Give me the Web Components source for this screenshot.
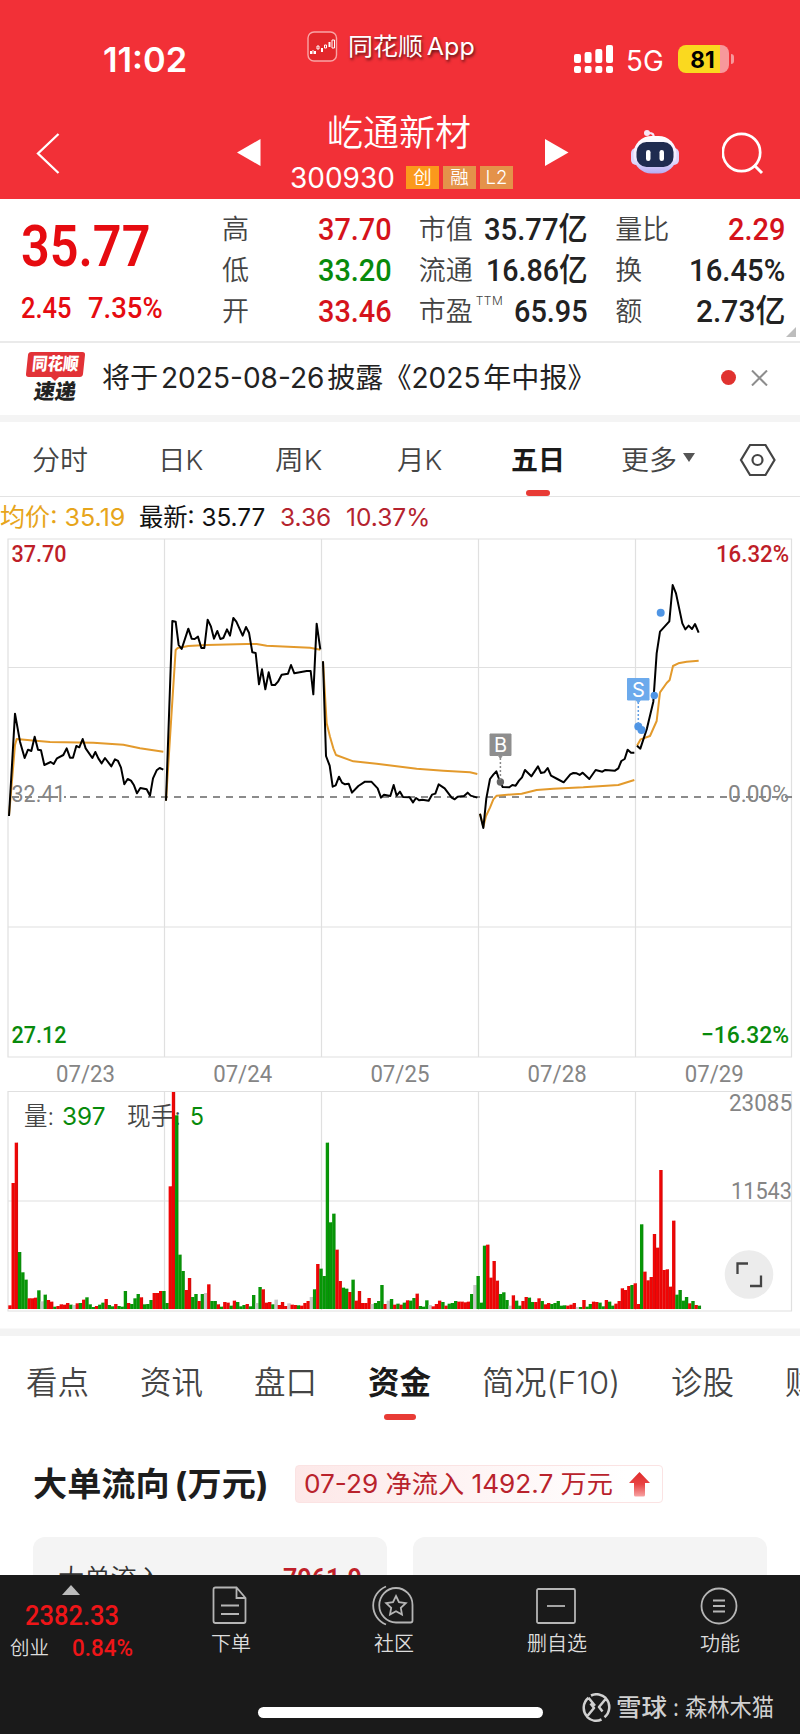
<!DOCTYPE html>
<html lang="zh-CN">
<head>
<meta charset="UTF-8">
<title>屹通新材 300930</title>
<style>
    body {
        margin: 0;
        width: 800px;
        height: 1734px;
        overflow: hidden;
        background: #fff;
        color: #222;
        font-family: "Inter", "Noto Sans CJK SC", sans-serif;
        --num: "Roboto", "Noto Sans CJK SC", sans-serif;
        --red: #e60b10;
        --green: #088a0b;
    }
</style>
</head>
<body>
<stock-app></stock-app>

<script>
// Registers an element whose shadow root holds the given markup
function component(name, html, setup) {
    customElements.define(name, class extends HTMLElement {
        constructor() {
            super();
            this.attachShadow({ mode: 'open' });
        }

        connectedCallback() {
            this.shadowRoot.innerHTML = typeof html === 'function' ? html(this) : html;
            if (setup) setup(this);
        }
    });
}

/**
 * Single line of text condensed or widened to the width in "w"
 */
component('fit-text', `
    <style>
        :host { display: inline-block; white-space: nowrap; flex: none; }
        span { display: inline-block; transform-origin: 0 50%; }
    </style>
    <span><slot></slot></span>
`, (el) => {
    const w = Number(el.getAttribute('w'));
    const span = el.shadowRoot.querySelector('span');
    const natural = span.offsetWidth;
    el.style.width = w + 'px';
    if (natural) span.style.transform = `scaleX(${w / natural})`;
});

/**
 * Phone status bar
 */
component('status-bar', `
    <style>
        :host { display: flex; height: 94px; color: #fff; align-items: flex-start; }
        .time { margin: 39px 0 0 103px; font-size: 34px; line-height: 42px; font-weight: 600; }
        .brand { display: flex; align-items: center; gap: 10px; margin: 31px 0 0 120px; height: 32px; font-size: 24px; word-spacing: -3px; text-shadow: 1px 2px 3px rgba(0,0,0,.65); }
        .brand fit-text { line-height: 32px; }
        .signal { margin: 45px 0 0 99px; }
        .net { margin: 42px 0 0 13px; font-size: 28.5px; line-height: 37px; }
        .battery { display: flex; margin: 45px 0 0 14px; align-items: center; }
        .level { width: 51px; height: 28px; border-radius: 8px; background: linear-gradient(90deg, #fad91f 42px, #f7989b 42px); color: #000; font-size: 22.5px; line-height: 29px; font-weight: 700; text-align: center; box-sizing: border-box; padding-right: 2px; }
        .nub { width: 3px; height: 10px; margin-left: 2px; border-radius: 0 3px 3px 0; background: #f7989b; }
    </style>
    <fit-text class="time" w="84">11:02</fit-text>
    <div class="brand">
        <svg width="31" height="32" viewBox="0 0 31 32">
            <rect x="1" y="1" width="28.500" height="29" rx="6" fill="#e3272b" stroke="#f9a5a6" stroke-width="1.400"/>
            <path d="M3 20h2v3H3zM7 20h2v3H7zM14 17h2v4h-2zM21.500 11h2v5h-2z" fill="#fff"/>
            <path d="M6 19v4M10 15h2v3h-2zM17.500 14h2v3h-2zM25 9h2.500v8H25z" fill="none" stroke="#fff" stroke-width="1"/>
        </svg>
        <fit-text w="127">同花顺 App</fit-text>
    </div>
    <svg class="signal" width="39" height="28" viewBox="0 0 39 28" fill="#fff">
        <rect x="0" y="9" width="7" height="9" rx="2"/><rect x="10.600" y="7" width="7" height="11" rx="2"/>
        <rect x="21.300" y="4" width="7" height="14" rx="2"/><rect x="32" y="0" width="7" height="18" rx="2"/>
        <rect x="0" y="21" width="7" height="7" rx="2"/><rect x="10.600" y="21" width="7" height="7" rx="2"/>
        <rect x="21.300" y="21" width="7" height="7" rx="2"/><rect x="32" y="21" width="7" height="7" rx="2"/>
    </svg>
    <fit-text class="net" w="38">5G</fit-text>
    <div class="battery"><div class="level">81</div><div class="nub"></div></div>
`);

/**
 * Stock name with paging arrows and tools
 */
component('stock-header', `
    <style>
        :host { display: flex; height: 105px; color: #fff; align-items: flex-start; }
        svg { display: block; flex: none; }
        .back { margin: 39px 0 0 36px; }
        .prev { margin: 45px 0 0 177px; }
        .title { width: 221px; margin: 17px 0 0 30px; display: flex; flex-direction: column; align-items: center; }
        .name { font-size: 36px; line-height: 44px; margin-right: 5px; font-weight: 350; }
        .code { display: flex; align-items: center; gap: 4px; height: 45px; font-size: 28px; }
        .code fit-text { line-height: 34px; }
        .code .num { margin-right: 7px; }
        .tag { width: 33px; height: 23px; background: #e4924a; font-size: 18.500px; line-height: 22px; text-align: center; font-weight: 350; }
        .tag.hot { background: #fb991c; }
        .next { margin: 45px 0 0 33px; }
        .robot { margin: 35px 0 0 61px; }
        .search { margin: 38px 0 0 42px; }
    </style>
    <svg class="back" width="24" height="41" viewBox="0 0 24 41"><path d="M22.500 1 2 20.500 22.500 40" fill="none" stroke="#fff" stroke-width="2.300"/></svg>
    <svg class="prev" width="24" height="27" viewBox="0 0 24 27"><path d="M0 13.500 23.500 0v27z" fill="#fff"/></svg>
    <div class="title">
        <fit-text class="name" w="144">屹通新材</fit-text>
        <div class="code">
            <fit-text class="num" w="105">300930</fit-text>
            <div class="tag hot">创</div><div class="tag">融</div><div class="tag">L2</div>
        </div>
    </div>
    <svg class="next" width="24" height="27" viewBox="0 0 24 27"><path d="M23.500 13.500 0 0v27z" fill="#fff"/></svg>
    <svg class="robot" width="50" height="47" viewBox="0 0 50 47">
        <defs><linearGradient id="shell" x2="0" y2="1"><stop stop-color="#fff"/><stop offset=".6" stop-color="#eeeaff"/><stop offset="1" stop-color="#b4abf2"/></linearGradient></defs>
        <path d="M24 10c0-5-1-6-6-6" fill="none" stroke="#f5e6f8" stroke-width="2.200"/>
        <circle cx="17" cy="4" r="3" fill="#f7e5f5"/>
        <rect x="1" y="19" width="48" height="17" rx="5" fill="#dcd5fa"/>
        <rect x="3.500" y="7" width="43" height="37.500" rx="18" fill="url(#shell)"/>
        <rect x="6.500" y="13" width="37" height="25" rx="10" fill="#1f2c50"/>
        <rect x="16" y="21" width="4.500" height="11" rx="2.200" fill="#fff"/>
        <rect x="29.500" y="21" width="4.500" height="11" rx="2.200" fill="#fff"/>
    </svg>
    <svg class="search" width="44" height="44" viewBox="0 0 44 44" fill="none" stroke="#fff" stroke-width="2.700"><circle cx="19.500" cy="20.500" r="18.700"/><path d="m32 33 8 8" stroke-width="3"/></svg>
`);

component('quote-cell', `
    <style>
        :host { display: flex; height: 41px; align-items: center; justify-content: space-between; }
        .label { display: flex; font-size: 27px; font-weight: 350; color: #444; line-height: 40px; margin-top: 2px; }
        .value { font-family: var(--num); font-size: 32px; font-weight: 500; line-height: 40px; }
    </style>
    <div class="label"><slot name="label"></slot></div>
    <div class="value"><slot></slot></div>
`);

component('quote-panel', `
    <style>
        :host { display: flex; height: 143.500px; padding: 9.500px 15px 0 21px; box-sizing: border-box; border-bottom: 2px solid #eaeaea; gap: 27px; position: relative; }
        .last { width: 174px; font-family: var(--num); color: var(--red); font-weight: 500; }
        .price { display: block; font-size: 57px; line-height: 76px; font-weight: 600; }
        .change { display: flex; gap: 16px; font-size: 30px; line-height: 46px; }
        .col { flex: 1; }
        .up { color: #d5131b; }
        .down { color: var(--green); }
        sup { font-size: 12px; line-height: 14px; margin: 2px 0 0 3px; letter-spacing: .5px; vertical-align: top; }
        .corner { position: absolute; right: 4px; bottom: 4px; }
    </style>
    <div class="last">
        <fit-text class="price" w="129">35.77</fit-text>
        <div class="change"><fit-text w="51">2.45</fit-text><fit-text w="75">7.35%</fit-text></div>
    </div>
    <div class="col">
        <quote-cell class="up"><span slot="label">高</span><fit-text w="74">37.70</fit-text></quote-cell>
        <quote-cell class="down"><span slot="label">低</span><fit-text w="74">33.20</fit-text></quote-cell>
        <quote-cell class="up"><span slot="label">开</span><fit-text w="74">33.46</fit-text></quote-cell>
    </div>
    <div class="col">
        <quote-cell><span slot="label">市值</span><fit-text w="104">35.77亿</fit-text></quote-cell>
        <quote-cell><span slot="label">流通</span><fit-text w="102">16.86亿</fit-text></quote-cell>
        <quote-cell><span slot="label">市盈</span><sup slot="label">TTM</sup><fit-text w="74">65.95</fit-text></quote-cell>
    </div>
    <div class="col">
        <quote-cell class="up"><span slot="label">量比</span><fit-text w="57">2.29</fit-text></quote-cell>
        <quote-cell><span slot="label">换</span><fit-text w="96">16.45%</fit-text></quote-cell>
        <quote-cell><span slot="label">额</span><fit-text w="89">2.73亿</fit-text></quote-cell>
    </div>
    <svg class="corner" width="10" height="10" viewBox="0 0 10 10"><path d="M10 0v10H0z" fill="#bdbdbd"/></svg>
`);

/**
 * Announcement strip
 */
component('news-banner', `
    <style>
        :host { display: flex; height: 79.500px; box-sizing: border-box; padding: 0 32px 2px 25px; align-items: center; border-bottom: 7px solid #f4f4f4; color: #222; }
        .logo { width: 60px; display: flex; flex-direction: column; align-items: center; }
        .flag { width: 57px; height: 25px; background: #e23237; border-radius: 3px; transform: skewX(-6deg); color: #fff; font-size: 17.500px; line-height: 24px; font-weight: 900; text-align: center; }
        .tip { width: 0; border: 4px solid transparent; border-top-color: #e23237; border-bottom: 0; }
        .word { font-size: 21px; line-height: 22px; font-weight: 900; transform: skewX(-9deg); }
        .msg { margin-left: 17px; font-size: 28px; line-height: 40px; word-spacing: -5px; }
        .dot { width: 15px; height: 15px; border-radius: 50%; background: #e0322f; margin-left: auto; margin-right: 15px; }
    </style>
    <div class="logo">
        <div class="flag"><fit-text w="47">同花顺</fit-text></div>
        <div class="tip"></div>
        <div class="word"><fit-text w="42">速递</fit-text></div>
    </div>
    <fit-text class="msg" w="494">将于 2025-08-26 披露《2025 年中报》</fit-text>
    <div class="dot"></div>
    <svg width="17" height="16" viewBox="0 0 17 16"><path d="m1 .5 15 15M16 .5l-15 15" stroke="#8d8d8d" stroke-width="2"/></svg>
`);

/**
 * Tab label; "active" makes it bold with a red underline
 */
component('tab-item', `
    <style>
        :host { display: flex; flex-direction: column; align-items: center; flex: none; height: 100%; font-weight: 350; color: #444; }
        :host([active]) { font-weight: 700; color: #1a1a1a; }
        .text { flex: 1; display: flex; align-items: center; }
        .bar { height: 6px; border-radius: 3px; width: var(--bar, 24px); }
        :host([active]) .bar { background: #e83b35; }
    </style>
    <div class="text"><slot></slot></div>
    <div class="bar"></div>
`);

component('period-tabs', `
    <style>
        :host { display: flex; height: 75px; box-sizing: border-box; padding: 3px 22px 0 32px; border-bottom: 1.500px solid #e3e3e3; font-size: 27.500px; }
        tab-item { margin-right: 70px; }
        .arrow { border: 6px solid transparent; border-top: 9px solid #555; border-bottom: 0; margin-left: 6px; }
        svg { margin-top: 17.500px; }
    </style>
    <tab-item><fit-text w="56">分时</fit-text></tab-item>
    <tab-item style="margin-right: 72px"><fit-text w="45">日K</fit-text></tab-item>
    <tab-item style="margin-right: 75px"><fit-text w="47">周K</fit-text></tab-item>
    <tab-item style="margin-right: 69px"><fit-text w="45">月K</fit-text></tab-item>
    <tab-item active style="margin-right: 56px"><fit-text w="54">五日</fit-text></tab-item>
    <tab-item style="margin-right: 44px"><fit-text w="56">更多</fit-text><i class="arrow"></i></tab-item>
    <svg width="38" height="34" viewBox="0 0 38 34" fill="none" stroke="#444" stroke-width="2.200"><path d="M11 2h15.500L35.500 17l-9 15H11L2 17z"/><circle cx="18.500" cy="17" r="5"/></svg>
`);

component('price-legend', `
    <style>
        :host { display: flex; height: 41px; font-size: 24.500px; line-height: 41px; color: #111; }
        .avg { color: #e7a51b; }
        .up { color: #b5232e; }
    </style>
    <fit-text class="avg" w="125">均价: 35.19</fit-text>
    <fit-text w="126" style="margin-left: 14px">最新: 35.77</fit-text>
    <fit-text class="up" w="51" style="margin-left: 15px">3.36</fit-text>
    <fit-text class="up" w="84" style="margin-left: 15px">10.37%</fit-text>
`);

// Each day: origin of its points, price line, average line (units of 1/3 px)
const DAYS = [
    [0, 530,
        '27,858 45,551 60,635 74,684 84,659 94,663 104,620 114,659 123,661 133,705 152,696 161,702 171,685 190,675 200,655 210,683 219,683 229,648 238,652 248,627 257,655 277,684 286,666 295,685 305,700 315,684 334,709 345,688 354,693 363,713 373,763 383,747 393,752 402,766 411,790 421,774 440,778 450,797 459,745 470,721 479,714 490,719',
        '27,858 45,645 50,627 90,631 150,636 280,638 370,644 420,655 490,665'],
    [0, 530,
        '498,812 517,273 527,275 536,345 545,357 565,296 575,326 584,327 594,320 604,354 613,354 623,269 633,290 642,326 652,303 661,327 670,324 681,298 690,317 700,264 709,275 728,317 738,291 747,308 757,367 767,369 777,463 786,418 796,478 806,427 815,465 825,465 834,455 845,434 864,431 873,405 883,430 920,423 932,423 940,493 950,281 961,358',
        '498,812 514,560 527,360 533,354 565,348 620,345 740,342 770,342 800,347 930,353 961,359'],
    [310, 620,
        '39,124 48,408 59,437 68,500 77,496 87,470 96,488 105,493 116,491 126,518 145,498 165,485 184,485 203,505 213,533 222,524 241,528 251,495 260,527 270,515 279,531 299,532 309,547 318,534 328,541 337,539 356,542 366,524 376,521 386,493 404,505 425,533 434,538 443,530 462,528 473,518 482,527 502,533',
        '39,124 50,310 60,350 70,385 78,405 130,424 200,431 320,446 400,452 480,457 502,462'],
    [470, 530,
        '30,851 40,894 49,805 60,747 70,734 79,724 88,750 98,771 118,772 127,765 137,767 147,752 156,742 165,720 184,739 204,709 213,729 223,727 233,714 243,737 262,747 281,757 301,733 310,729 320,730 329,735 338,728 358,747 377,720 397,725 406,720 435,722 445,715 454,693 464,687 473,659 483,668 493,668',
        '30,851 40,890 48,858 60,833 70,808 80,797 155,791 200,780 250,776 340,772 445,765 493,750'],
    [470, 530,
        '501,647 511,656 531,595 550,515 560,370 570,305 598,274 608,165 618,190 637,280 646,298 656,287 666,297 675,282 686,308',
        '501,647 512,628 540,618 560,573 570,487 590,459 599,450 609,408 625,400 650,395 686,392']
];

const chartStyle = `
    <style>
        :host { display: block; }
        svg { display: block; }
        text { font-family: var(--num); font-size: 24.500px; }
        .grid { fill: none; stroke: #e0e0e0; stroke-width: 1.200; }
        .axis { font-weight: 500; }
        .grey { fill: #858585; }
    </style>
`;

function label(x, y, w, text, attrs = '') {
    return `<text x="${x}" y="${y}" textLength="${w}" lengthAdjust="spacingAndGlyphs" ${attrs}>${text}</text>`;
}

component('price-chart', () => {
    const lines = DAYS.map(([x, y, price, avg]) => `
        <g transform="translate(${x} ${y}) scale(.33333)" fill="none" stroke-linejoin="round">
            <polyline points="${avg}" stroke="#e39a2c" stroke-width="6"/>
            <polyline points="${price}" stroke="#000" stroke-width="6"/>
        </g>`).join('');
    const dates = ['07/23', '07/24', '07/25', '07/28', '07/29']
        .map((d, i) => label(56 + i * 157.2, 1082, 59, d, 'class="grey"')).join('');

    return chartStyle + `
    <svg width="800" height="552" viewBox="0 538 800 552">
        <path class="grid" d="M8 539h783.500v518H8zM8 667.500h783.500M8 927h783.500M164.500 539v518M321.500 539v518M478.500 539v518M635.500 539v518"/>
        <path d="M70 797H792M12 797h54" stroke="#666" stroke-width="1.400" stroke-dasharray="7 6"/>
        ${lines}
        <g fill="#4f95e4">
            <circle cx="660.700" cy="612.700" r="4"/><circle cx="654.300" cy="695.500" r="3.700"/>
            <circle cx="638.300" cy="726.500" r="4"/><circle cx="641.500" cy="730" r="4"/>
        </g>
        <circle cx="500.400" cy="782" r="3.700" fill="#666"/>
        <path d="M500.400 758v22" stroke="#888" stroke-width="1.500" stroke-dasharray="2 2"/>
        <path d="M638.300 702v22" stroke="#609de2" stroke-width="1.500" stroke-dasharray="2 2"/>
        <path d="M490 734h21v21.500h-8.500l-2.100 3-2.100-3H490z" fill="#8e8e8e" stroke="#8e8e8e" stroke-linejoin="round"/>
        <path d="M627.500 678.500h21.500v21.500h-8.500l-2.200 3-2.200-3h-8.600z" fill="#6caaec" stroke="#6caaec" stroke-linejoin="round"/>
        <g fill="#fff" text-anchor="middle">
            <text x="500.500" y="752" style="font: 20px Inter">B</text>
            <text x="638.300" y="696.500" style="font: 20px Inter">S</text>
        </g>
        <g class="axis">
            ${label(11.5, 562, 55, '37.70', 'fill="#be1e28"')}
            ${label(716, 562, 73, '16.32%', 'fill="#be1e28"')}
            ${label(11.5, 1043, 55, '27.12', 'fill="#088a0b"')}
            ${label(701, 1043, 88, '−16.32%', 'fill="#088a0b"')}
        </g>
        ${label(11.5, 802, 54, '32.41', 'class="grey"')}
        ${label(728, 802, 61, '0.00%', 'class="grey"')}
        ${dates}
    </svg>`;
});

// Volume bars: r up, g down, x flat; number is the height in 1/3 px
const VOLUME = `r11 r378 r499 g171 g110 g88 r32 r32 r34 g56 x23 g43 r27 r22 g7 r9 r14 r13 r18 g13 x12 r17 g18 r28 g35 g14 g6 r9 g13 g19
r30 g12 g8 r15 g9 g7 g54 r18 g15 g32 g45 r35 g14 g15 g27 r48 r48 r54 g54 g18 r368 r651 g581 g163 g114 r57 r93 g36 g45 r24 g45 x48 r74
g24 g24 r14 g7 r21 r19 g10 r25 g21 g8 g12 r15 g8 g42 x18 g66 r59 r19 r21 g14 x28 r12 r21 r9 x17 r13 r12 g11 r10 r18 r24 x36 g59 r135
g121 g99 g499 g260 g286 r178 r84 g64 g61 r51 g88 r25 r54 r18 r18 r33 x15 g18 g24 g72 r15 x25 g30 r13 g16 r13 g19 r26 g25 g33 r46 g9 g7
g26 x12 r8 r15 r25 g21 r10 g16 g18 g24 r22 r22 r20 r22 g45 x72 g99 g19 g190 r193 r94 r144 r85 g45 g50 g27 x10 r41 g25 g10 r24 r36 g34
g21 r21 r32 g24 r14 r18 g15 g18 g24 g10 g11 r10 r13 r18 x6 g6 r27 g7 g15 r22 r21 g19 g8 r27 g22 g10 r16 r24 r62 r57 r69 g72 r77 r15
g254 r112 r86 r96 r225 r184 r417 r117 r119 r67 r265 g43 g57 g25 g36 r17 g24 r12 g10`.split(/\s+/);

component('volume-chart', () => {
    const fills = { r: '#f00505', g: '#069806', x: '#c8c8c8' };
    const edges = { r: '#b51414', g: '#167a16', x: '#b5b5b5' };
    const bars = VOLUME.map((v, i) => {
        const h = v.slice(1) / 3;
        const x = 8.3 + i * 3.2065;
        return `<rect x="${x.toFixed(2)}" y="${(1309 - h).toFixed(2)}" width="3.250" height="${h.toFixed(2)}" fill="${fills[v[0]]}"/>
            <path d="M${(x + 2.9).toFixed(2)} 1309v-${h.toFixed(2)}" stroke="${edges[v[0]]}" stroke-width=".5"/>`;
    }).join('');

    return chartStyle + `
    <style>.info { font-family: Inter, "Noto Sans CJK SC", sans-serif; font-weight: 350; }</style>
    <svg width="800" height="246" viewBox="0 1090 800 246">
        <path class="grid" d="M8 1091.500h783.500V1311H8zM8 1201h783.500M164.500 1091v219M321.500 1091v219M478.500 1091v219M635.500 1091v219"/>
        ${label(24, 1125, 30, '量:', 'class="info" fill="#444"')}
        ${label(62, 1125, 43.5, '397', 'class="info" fill="#088a0b" style="font-weight:400"')}
        ${label(127, 1125, 54, '现手:', 'class="info" fill="#444"')}
        ${label(190, 1125, 14, '5', 'class="info" fill="#088a0b" style="font-weight:400"')}
        ${bars}
        ${label(729, 1111, 63, '23085', 'class="grey"')}
        ${label(731, 1199, 61, '11543', 'class="grey"')}
        <circle cx="749" cy="1274.500" r="24.300" fill="#ececec"/>
        <path d="M737.500 1274v-10.500H748M761 1275.500V1286h-11" fill="none" stroke="#444" stroke-width="2.300"/>
        <path d="M0 1328.500h800v7.500H0z" fill="#f3f3f3"/>
    </svg>`;
});

component('section-tabs', `
    <style>
        :host { display: flex; height: 84px; gap: 51px; padding-left: 26px; font-size: 31.500px; overflow: hidden; --bar: 32px; }
        tab-item { padding-top: 9px; box-sizing: border-box; }
    </style>
    <tab-item><fit-text w="63">看点</fit-text></tab-item>
    <tab-item><fit-text w="63">资讯</fit-text></tab-item>
    <tab-item><fit-text w="63">盘口</fit-text></tab-item>
    <tab-item active><fit-text w="63">资金</fit-text></tab-item>
    <tab-item><fit-text w="138">简况(F10)</fit-text></tab-item>
    <tab-item><fit-text w="63">诊股</fit-text></tab-item>
    <tab-item><fit-text w="63">财务</fit-text></tab-item>
`);

/**
 * Large order flow card
 */
component('fund-flow', `
    <style>
        :host { display: block; height: 155px; padding: 44.500px 33px 0; overflow: hidden; box-sizing: border-box; }
        .head { display: flex; align-items: center; gap: 26px; height: 39px; }
        .title { font-size: 33px; font-weight: 700; line-height: 38px; color: #1d1d1d; word-spacing: -3px; }
        .pill { display: flex; align-items: center; gap: 16px; width: 368px; height: 38px; padding-left: 8px; box-sizing: border-box; border: 1px solid #fbe3e3; border-radius: 4px; background: linear-gradient(90deg, #fde8e8, #fff 90%); color: #b9222c; font-size: 25px; line-height: 36px; }
        .cards { display: flex; gap: 26px; margin-top: 33px; }
        .card { flex: 1; height: 100px; border-radius: 12px; background: #f4f4f4; display: flex; justify-content: space-between; padding: 22px 25px 0; box-sizing: border-box; font-size: 26px; line-height: 40px; font-weight: 350; color: #333; }
        .sum { font-family: var(--num); font-size: 28px; font-weight: 600; color: #c01f29; }
    </style>
    <div class="head">
        <fit-text class="title" w="236">大单流向 (万元)</fit-text>
        <div class="pill">
            <fit-text w="309">07-29 净流入 1492.7 万元</fit-text>
            <svg width="21" height="25" viewBox="0 0 21 25">
                <defs><linearGradient id="up" x2="0" y2="1"><stop stop-color="#e02c2c"/><stop offset=".5" stop-color="#e84343"/><stop offset="1" stop-color="#f7a3a3"/></linearGradient></defs>
                <path d="M10.500 0 21 11h-5v12q0 1.500-1.500 1.500h-8Q5 24.500 5 23V11H0z" fill="url(#up)"/>
            </svg>
        </div>
    </div>
    <div class="cards">
        <div class="card"><fit-text w="105">大单流入</fit-text><fit-text class="sum" w="79">7961.9</fit-text></div>
        <div class="card"></div>
    </div>
`);

component('nav-item', `
    <style>
        :host { display: flex; flex-direction: column; align-items: center; width: 163px; flex: none; }
        .icon { height: 41px; display: flex; align-items: center; }
        .text { font-size: 20px; line-height: 30px; margin-top: 3px; color: #ddd; font-weight: 350; padding-left: 3px; }
    </style>
    <div class="icon"><slot name="icon"></slot></div>
    <div class="text"><slot></slot></div>
`);

component('bottom-nav', `
    <style>
        :host { display: block; height: 159px; background: #1a1a1a; color: #ddd; }
        .items { display: flex; padding-top: 10px; height: 125px; box-sizing: border-box; }
        .index { width: 148px; box-sizing: border-box; color: #ee1518; font-family: var(--num); font-weight: 500; }
        .tri { width: 0; border: 9px solid transparent; border-top: 0; border-bottom: 10px solid #bbb; margin-left: 62px; }
        .point { display: block; margin-left: 25px; font-size: 28.500px; line-height: 33px; margin-top: 4px; }
        .sub { display: flex; gap: 23px; margin-left: 10px; font-size: 23.500px; line-height: 32px; }
        .sub .name { color: #ddd; font-size: 19.500px; font-weight: 350; line-height: 34px; }
        svg { display: block; fill: none; stroke: #b5b5b5; stroke-width: 1.800; }
        .foot { display: flex; align-items: center; height: 24px; padding-left: 258px; }
        .home { width: 285px; height: 11px; border-radius: 6px; background: #fff; }
        .mark { display: flex; align-items: center; margin-left: 39px; color: #d0d0d0; font-size: 24px; line-height: 30px; margin-top: -9px; }
        .mark svg { stroke: #d0d0d0; margin-right: 5px; }
    </style>
    <div class="items">
        <div class="index">
            <div class="tri"></div>
            <fit-text class="point" w="94">2382.33</fit-text>
            <div class="sub"><fit-text class="name" w="39">创业</fit-text><fit-text w="61">0.84%</fit-text></div>
        </div>
        <nav-item>
            <svg slot="icon" width="36" height="39" viewBox="0 0 36 39"><path d="M3.500 1.500h21l9 10.500V35q0 2-2 2h-28q-2 0-2-2V3.500q0-2 2-2zM24.500 1.500V12h9M9 19.500h18M9 28h18"/></svg>
            下单
        </nav-item>
        <nav-item>
            <svg slot="icon" width="42" height="41" viewBox="0 0 42 41"><path d="M14 1.500A20.500 20.500 0 0 0 14 39.500M24 3a16.500 17 0 1 0 0 34.500h14.500q2 0 2-2V20A16.500 17 0 0 0 24 3z"/><path d="m24 11 3 6.200 6.800.9-5 4.700 1.200 6.800-6-3.300-6 3.300 1.200-6.800-5-4.700 6.800-.9z"/></svg>
            社区
        </nav-item>
        <nav-item>
            <svg slot="icon" width="40" height="36" viewBox="0 0 40 36"><rect x="1" y="1" width="38" height="34" rx="1.500"/><path d="M11 18h18"/></svg>
            删自选
        </nav-item>
        <nav-item>
            <svg slot="icon" width="38" height="38" viewBox="0 0 38 38"><circle cx="19" cy="19" r="17.500"/><path d="M13 13.500h12M13 19h12M13 24.500h12"/></svg>
            功能
        </nav-item>
    </div>
    <div class="foot">
        <div class="home"></div>
        <div class="mark">
            <svg width="29" height="29" viewBox="0 0 29 29" stroke-linejoin="round"><path d="M9 2.500A13 13 0 0 1 24 5.200M5 23.800A13 13 0 0 0 19.500 26.500M6.500 4.800A13 13 0 0 0 5 23.500l7-8.500-3.500-4.500M6.500 4.800l6.500 8M22.500 24.200A13 13 0 0 0 24 5.500l-7 8.500 3.500 4.500" stroke-width="2.500"/></svg>
            <fit-text w="51" style="font-weight: 500">雪球</fit-text>
            <fit-text w="6" style="margin: 0 6px">:</fit-text>
            <fit-text w="89">森林木猫</fit-text>
        </div>
    </div>
`);

component('stock-app', `
    <style>
        :host { display: flex; flex-direction: column; width: 800px; }
        .top { background: #f23037; }
        section-tabs, fund-flow, bottom-nav { flex: none; }
    </style>
    <div class="top">
        <status-bar></status-bar>
        <stock-header></stock-header>
    </div>
    <quote-panel></quote-panel>
    <news-banner></news-banner>
    <period-tabs></period-tabs>
    <price-legend></price-legend>
    <price-chart></price-chart>
    <volume-chart></volume-chart>
    <section-tabs></section-tabs>
    <fund-flow></fund-flow>
    <bottom-nav></bottom-nav>
`);
</script>
</body>
</html>
